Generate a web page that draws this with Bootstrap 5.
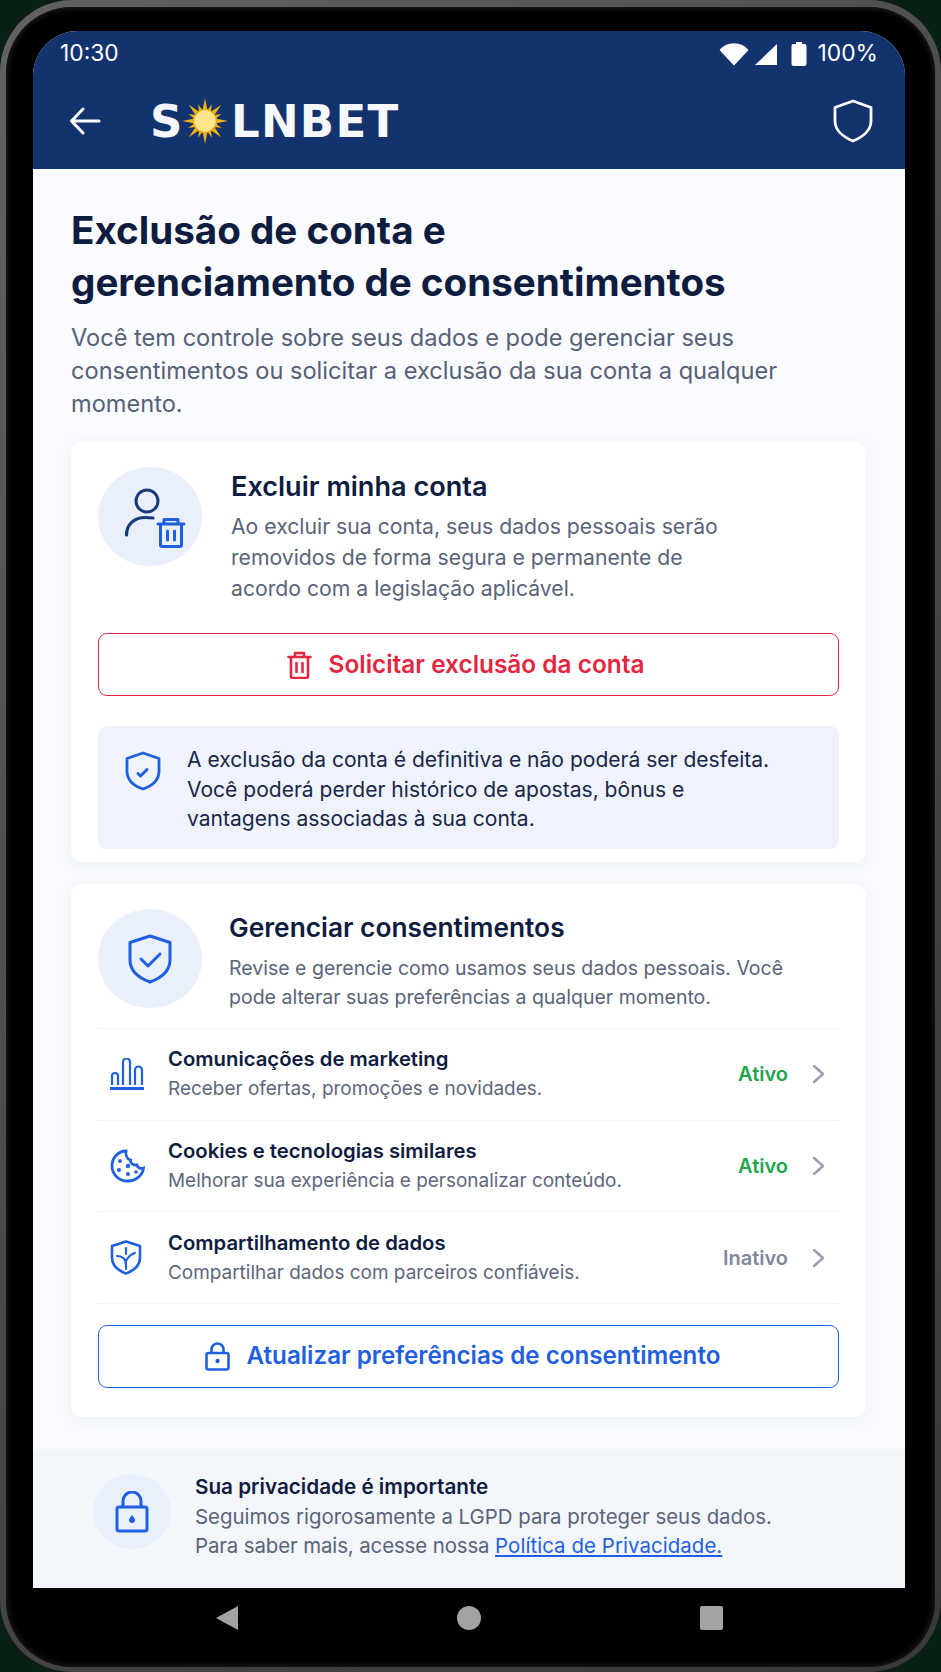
<!DOCTYPE html>
<html lang="pt-BR">
<head>
<meta charset="utf-8">
<title>Solnbet</title>
<link href="https://cdn.jsdelivr.net/npm/bootstrap@5.3.0/dist/css/bootstrap.min.css" rel="stylesheet">
<style>
html,body{margin:0;background:#0a1f14;height:1672px;overflow:hidden}
body{font-family:"Inter","Liberation Sans",sans-serif}
.phone-shell{height:1672px;width:941px;border-radius:72px;background:linear-gradient(135deg,#626262,#484848 50%,#383838);padding:7px 6px 5px 6px;position:relative}
.phone-bezel{height:100%;border-radius:66px;background:#000;padding:24px 30px 0 27px;display:flex;flex-direction:column;box-shadow:inset 0 0 7px #2b2b2b}
.phone-screen{height:1557px;background:#f9fbfe;border-radius:45px 45px 0 0;overflow:hidden;display:flex;flex-direction:column;flex:none}
.top-zone{background:#12336e;color:#fff;height:138px;flex:none;padding:0 27px 0 27px}
.status-row{height:42px;font-family:"Inter",sans-serif;font-size:22.8px;padding-top:3px}
.app-row{height:96px;padding-right:5px}
.logo-text{font-family:"DejaVu Sans",sans-serif;font-weight:700;font-size:45px;line-height:1;color:#f6f7fb}
.logo-letters{letter-spacing:1.3px}
.logo-wrap{margin-left:48px}
.sun-mark{margin:0 2.5px 0 0;flex:none}
.pct-gap{margin-left:6px}
.main-pane{padding:35px 39px 0 38px;flex:1}
.page-title{font-size:38.6px;line-height:52px;font-weight:700;color:#0e1c40;margin:0 0 13px}
.page-sub{font-size:23.6px;line-height:33px;color:#566076;margin:0 0 22px}
.panel{border:0;border-radius:11px;background:#fff;box-shadow:0 3px 14px rgba(40,70,130,.06)}
.panel-a{padding:25px 27px 13px;margin-bottom:22px}
.panel-b{padding:25px 27px 29px}
.round-icon{width:104px;height:99px;border-radius:50%;background:#e9f0fb;flex:none}
.panel-h{font-size:27.1px;line-height:32px;font-weight:600;color:#0e1c40;margin:4px 0 8px}
.panel-h-b{font-size:26.3px;margin:3px 0 10px}
.panel-p{font-size:21.2px;line-height:31px;color:#596379;margin:0}
.panel-p-b{font-size:19.5px;line-height:29px}
.head-gap-a{gap:29px}
.head-gap-b{gap:27px}
.action-btn{height:63px;width:100%;border-radius:9px;background:#fff;font-size:24.4px;font-weight:600;gap:17px;display:flex;align-items:center;justify-content:center}
.btn-red{border:1.5px solid #e5263f;color:#e5263f;margin-top:29px;padding:0 6px 0 0}
.btn-blue{border:1.5px solid #2163e3;color:#1f5fe0;margin-top:21px;font-size:24.2px;padding:0 12px 0 0}
.notice{margin-top:30px;height:123px;background:#eef3fd;border-radius:9px;padding:19px 20px 0 27px;gap:26px;font-size:21.05px;line-height:29.5px;color:#1a2747}
.notice svg{margin-top:6px;flex:none}
.head-b{padding-bottom:16px;border-bottom:1px solid #f0f2f6}
.pref-row{height:91.7px;border-bottom:1px solid #f0f2f6;padding:0 14px 0 12px}
.pref-icon{width:36px;flex:none;margin-right:22px}
.pref-t{font-size:20.3px;line-height:26px;font-weight:600;color:#0e1c40;margin-bottom:4px}
.pref-s{font-size:18.95px;line-height:26px;color:#5d667c}
.state-on,.state-off{font-size:20px;font-weight:600;margin-right:24px}
.state-on{color:#1fa54c}
.state-off{color:#81879b}
.person-icon{margin-left:10px}
.foot-pane{height:139px;flex:none;background:#f3f6fb;padding:25px 30px 0 60px;gap:24px}
.foot-icon{width:78px;height:75px;border-radius:50%;background:#e9f0fb;flex:none}
.foot-t{font-size:20.7px;line-height:26px;font-weight:600;color:#0e1c40;margin-bottom:2px;margin-top:0}
.foot-p{font-size:20.4px;line-height:29px;color:#596379;margin:0}
.foot-lead{letter-spacing:-.1px}
.foot-p a{color:#1f5fe0;letter-spacing:.08px}
.nav-zone{flex:1;padding-top:18px;gap:0}
.nav-slot{width:242px;flex:none}
</style>
</head>
<body>
<div class="phone-shell">
 <div class="phone-bezel">
  <div class="phone-screen">
   <div class="top-zone">
    <div class="status-row d-flex align-items-center justify-content-between">
     <span>10:30</span>
     <span class="d-flex align-items-center" style="gap:5px">
      <svg width="30" height="24" viewBox="0 0 30 24"><path d="M1.500 8C5 4 10 2 15 2s10 2 13.500 6L15 22.500z" fill="#fff" stroke="#fff" stroke-width="1.500" stroke-linejoin="round"/></svg>
      <svg width="24" height="24" viewBox="0 0 24 24"><path d="M23 2v21H1z" fill="#fff"/></svg>
      <svg width="16" height="25" viewBox="0 0 16 25" class="ms-2"><path d="M5 1h6v2h2.500a2 2 0 0 1 2 2v18a2 2 0 0 1-2 2h-11a2 2 0 0 1-2-2V5a2 2 0 0 1 2-2H5z" fill="#fff"/></svg>
      <span class="pct-gap">100%</span>
     </span>
    </div>
    <div class="app-row d-flex align-items-center">
     <svg width="34" height="30" viewBox="0 0 34 30" fill="none" stroke="#fff" stroke-width="3" stroke-linecap="round" stroke-linejoin="round" class="ms-2 flex-none"><path d="M31 15H4M15 3 3.500 15 15 27"/></svg>
     <div class="logo-wrap d-flex align-items-center logo-text">
      <span>S</span>
      <svg class="sun-mark" width="46" height="46" viewBox="-23 -23 46 46">
       <g fill="#f2b516">
        <path id="ray" d="M-2.500-10 0-23 2.500-10z"/>
        <use href="#ray" transform="rotate(45)"/><use href="#ray" transform="rotate(90)"/><use href="#ray" transform="rotate(135)"/><use href="#ray" transform="rotate(180)"/><use href="#ray" transform="rotate(225)"/><use href="#ray" transform="rotate(270)"/><use href="#ray" transform="rotate(315)"/>
        <path d="M-2 -10 0-18 2 -10z" transform="rotate(22.500)"/>
        <path d="M-2 -10 0-18 2 -10z" transform="rotate(67.500)"/><path d="M-2 -10 0-18 2 -10z" transform="rotate(112.500)"/><path d="M-2 -10 0-18 2 -10z" transform="rotate(157.500)"/><path d="M-2 -10 0-18 2 -10z" transform="rotate(202.500)"/><path d="M-2 -10 0-18 2 -10z" transform="rotate(247.500)"/><path d="M-2 -10 0-18 2 -10z" transform="rotate(292.500)"/><path d="M-2 -10 0-18 2 -10z" transform="rotate(337.500)"/>
       </g>
       <circle r="11.500" fill="#fde58c" stroke="#e9a90f" stroke-width="1.500"/>
      </svg>
      <span class="logo-letters">LNBET</span>
     </div>
     <svg width="40" height="44" viewBox="0 0 40 44" fill="none" stroke="#fff" stroke-width="2.800" stroke-linejoin="round" class="ms-auto"><path d="M20 2 38 8.500V22C38 31 30 38 20 42 10 38 2 31 2 22V8.500z"/></svg>
    </div>
   </div>

   <div class="main-pane">
    <h1 class="page-title">Exclusão de conta e<br>gerenciamento de consentimentos</h1>
    <p class="page-sub">Você tem controle sobre seus dados e pode gerenciar seus<br>consentimentos ou solicitar a exclusão da sua conta a qualquer<br>momento.</p>

    <div class="card panel panel-a">
     <div class="d-flex head-gap-a">
      <div class="round-icon d-flex align-items-center justify-content-center">
       <svg class="person-icon" width="66" height="66" viewBox="0 0 66 66" fill="none" stroke-linecap="round" stroke-linejoin="round">
        <circle cx="25" cy="17" r="11" stroke="#173a78" stroke-width="3"/>
        <path d="M4.500 51c0-11 8-17.500 19-17.500 3 0 5 .2 7.500.5" stroke="#173a78" stroke-width="3.200"/>
        <path d="M36 40h26M42 40v-4.500h14V40M38.500 40v21a1.500 1.500 0 0 0 1.500 1.500h18a1.500 1.500 0 0 0 1.500-1.500V40M45.500 47v9M52.500 47v9" stroke="#1f5fe0" stroke-width="3"/>
       </svg>
      </div>
      <div>
       <h2 class="panel-h">Excluir minha conta</h2>
       <p class="panel-p">Ao excluir sua conta, seus dados pessoais serão<br>removidos de forma segura e permanente de<br>acordo com a legislação aplicável.</p>
      </div>
     </div>
     <button type="button" class="btn action-btn btn-red">
      <svg width="25" height="28" viewBox="0 0 25 28" fill="none" stroke="#e5263f" stroke-width="2.600" stroke-linecap="round" stroke-linejoin="round"><path d="M1.500 6h22M8 6V2h9v4M4 6v19a2 2 0 0 0 2 2h13a2 2 0 0 0 2-2V6M9.500 12v9M15.500 12v9"/></svg>
      <span>Solicitar exclusão da conta</span>
     </button>
     <div class="notice d-flex">
      <svg width="36" height="40" viewBox="0 0 36 40" fill="none" stroke="#1f5fe0" stroke-width="2.800" stroke-linejoin="round" stroke-linecap="round"><path d="M18 2 34 7.500V20C34 29 27 35 18 38 9 35 2 29 2 20V7.500z"/><path d="M13 22.500 15.500 25 22 18.500" stroke-width="3"/></svg>
      <div>A exclusão da conta é definitiva e não poderá ser desfeita.<br>Você poderá perder histórico de apostas, bônus e<br>vantagens associadas à sua conta.</div>
     </div>
    </div>

    <div class="card panel panel-b">
     <div class="d-flex head-gap-b head-b">
      <div class="round-icon d-flex align-items-center justify-content-center">
       <svg width="44" height="50" viewBox="0 0 44 50" fill="none" stroke="#1f5fe0" stroke-width="3" stroke-linejoin="round" stroke-linecap="round"><path d="M22 2 42 8.500V26C42 37 33 44 22 48 11 44 2 37 2 26V8.500z"/><path d="M13 25 20 32 32 20"/></svg>
      </div>
      <div>
       <h2 class="panel-h panel-h-b">Gerenciar consentimentos</h2>
       <p class="panel-p panel-p-b">Revise e gerencie como usamos seus dados pessoais. Você<br>pode alterar suas preferências a qualquer momento.</p>
      </div>
     </div>

     <div class="pref-row d-flex align-items-center">
      <div class="pref-icon">
       <svg width="34" height="32" viewBox="0 0 34 32" fill="none" stroke="#1f5fe0" stroke-width="2.200"><path d="M0 30.500h34" stroke-width="2.800"/><path d="M2 27v-9a3 3 0 0 1 6 0v9M13 27V4a3.500 3.500 0 0 1 7 0v23M25 27V12a3.500 3.500 0 0 1 7 0v15"/></svg>
      </div>
      <div class="flex-grow-1"><div class="pref-t">Comunicações de marketing</div><div class="pref-s">Receber ofertas, promoções e novidades.</div></div>
      <span class="state-on">Ativo</span>
      <svg width="13" height="20" viewBox="0 0 13 20" fill="none" stroke="#9a9fb2" stroke-width="2.400" stroke-linecap="round" stroke-linejoin="round"><path d="M2 2l9 8-9 8"/></svg>
     </div>

     <div class="pref-row d-flex align-items-center">
      <div class="pref-icon">
       <svg width="35" height="34" viewBox="0 0 35 34" fill="none" stroke="#1f5fe0" stroke-width="2.800" stroke-linecap="round"><path d="M16 2C8 2 2 9 2 17c0 8.500 7 15 15.500 15S33 26 33.500 19c-3 1-6 0-6.500-3-4 .5-7-2-6.500-5C17 10 15.500 6 16 2z"/><circle cx="10" cy="12" r="1.900" fill="#1f5fe0" stroke="none"/><circle cx="18" cy="17" r="2.200" fill="#1f5fe0" stroke="none"/><circle cx="9" cy="21" r="2" fill="#1f5fe0" stroke="none"/><circle cx="18" cy="25" r="2" fill="#1f5fe0" stroke="none"/><circle cx="26" cy="23" r="1.800" fill="#1f5fe0" stroke="none"/></svg>
      </div>
      <div class="flex-grow-1"><div class="pref-t">Cookies e tecnologias similares</div><div class="pref-s">Melhorar sua experiência e personalizar conteúdo.</div></div>
      <span class="state-on">Ativo</span>
      <svg width="13" height="20" viewBox="0 0 13 20" fill="none" stroke="#9a9fb2" stroke-width="2.400" stroke-linecap="round" stroke-linejoin="round"><path d="M2 2l9 8-9 8"/></svg>
     </div>

     <div class="pref-row d-flex align-items-center">
      <div class="pref-icon">
       <svg width="32" height="35" viewBox="0 0 32 35" fill="none" stroke="#1f5fe0" stroke-width="2.600" stroke-linejoin="round" stroke-linecap="round"><path d="M16 1.500 30 6V18c0 7.500-6 12.500-14 15.500C8 30.500 2 25.500 2 18V6z"/><path d="M16 8v6M7 16c4 0 9 2 9 9v4M25 13c-4 1-7 4-9 8" stroke-width="2.200"/></svg>
      </div>
      <div class="flex-grow-1"><div class="pref-t">Compartilhamento de dados</div><div class="pref-s">Compartilhar dados com parceiros confiáveis.</div></div>
      <span class="state-off">Inativo</span>
      <svg width="13" height="20" viewBox="0 0 13 20" fill="none" stroke="#9a9fb2" stroke-width="2.400" stroke-linecap="round" stroke-linejoin="round"><path d="M2 2l9 8-9 8"/></svg>
     </div>

     <button type="button" class="btn action-btn btn-blue">
      <svg width="25" height="29" viewBox="0 0 25 29" fill="none" stroke="#1f5fe0" stroke-width="2.600" stroke-linejoin="round"><rect x="1.500" y="11" width="22" height="16.500" rx="2"/><path d="M6.500 11V7.500a6 6 0 0 1 12 0V11"/><circle cx="12.500" cy="19" r="2.200" fill="#1f5fe0" stroke="none"/></svg>
      <span>Atualizar preferências de consentimento</span>
     </button>
    </div>
   </div>

   <div class="foot-pane d-flex">
    <div class="foot-icon d-flex align-items-center justify-content-center">
     <svg width="34" height="42" viewBox="0 0 34 42" fill="none" stroke="#1f5fe0" stroke-width="3" stroke-linejoin="round"><rect x="2" y="16" width="30" height="24" rx="2"/><path d="M8 16V10a9 9 0 0 1 18 0v6"/><path d="M17 24c2.500 3 3 4 3 5a3 3 0 0 1-6 0c0-1 .5-2 3-5z" fill="#1f5fe0" stroke="none"/></svg>
    </div>
    <div>
     <div class="foot-t">Sua privacidade é importante</div>
     <p class="foot-p">Seguimos rigorosamente a LGPD para proteger seus dados.<br><span class="foot-lead">Para saber mais, acesse nossa </span><a href="#">Política de Privacidade.</a></p>
    </div>
   </div>
  </div>
  <div class="nav-zone d-flex justify-content-center">
   <div class="nav-slot d-flex justify-content-center">
    <svg width="23" height="24" viewBox="0 0 23 24"><path d="M22 0v24L0 12z" fill="#a3a3a3"/></svg>
   </div>
   <div class="nav-slot d-flex justify-content-center">
    <svg width="24" height="24" viewBox="0 0 24 24"><circle cx="12" cy="12" r="12" fill="#a3a3a3"/></svg>
   </div>
   <div class="nav-slot d-flex justify-content-center">
    <svg width="23" height="24" viewBox="0 0 23 24"><rect width="23" height="24" rx="2" fill="#a3a3a3"/></svg>
   </div>
  </div>
 </div>
</div>
<script src="https://cdn.jsdelivr.net/npm/bootstrap@5.3.0/dist/js/bootstrap.bundle.min.js"></script>
</body>
</html>
